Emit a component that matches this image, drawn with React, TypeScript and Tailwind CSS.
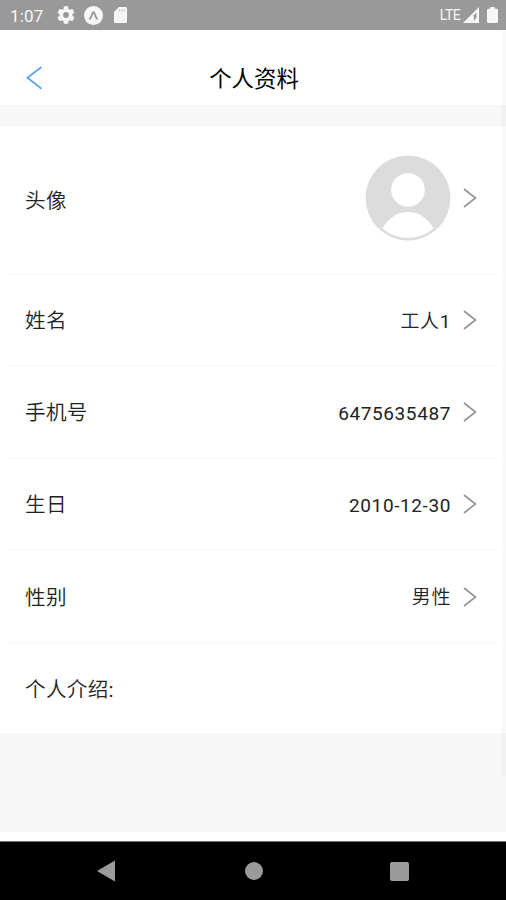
import React from 'react';

interface RowProps {
  label: string;
  className: string;
  divider?: boolean;
  children?: React.ReactNode;
}

const FONT = "font-[Roboto,'Noto_Sans_CJK_SC',sans-serif]";
const LIGHT_FONT = "font-[Roboto,'Noto_Sans_CJK_SC_DemiLight','Noto_Sans_CJK_SC',sans-serif]";

function StatusBar() {
  return (
    <div className="flex h-[30px] shrink-0 items-center justify-between bg-[#999999] pr-2 pl-[10px] text-[#f7f7f7]">
      <div className="flex items-center">
        <span className="w-[46px] pt-px text-[17px] leading-[30px] tracking-[0.2px]">1:07</span>
        <svg className="mr-[9px] ml-px h-[18px] w-[18px]" viewBox="2 2 20 20" fill="currentColor">
          <path d="M19.14 12.94c.04-.3.06-.61.06-.94 0-.32-.02-.64-.07-.94l2.03-1.58c.18-.14.23-.41.12-.61l-1.92-3.32c-.12-.22-.37-.29-.59-.22l-2.39.96c-.5-.38-1.03-.7-1.62-.94l-.36-2.54c-.04-.24-.24-.41-.48-.41h-3.84c-.24 0-.43.17-.47.41l-.36 2.54c-.59.24-1.13.57-1.62.94l-2.39-.96c-.22-.08-.47 0-.59.22L2.74 8.87c-.12.21-.08.47.12.61l2.03 1.58c-.05.3-.09.63-.09.94s.02.64.07.94l-2.03 1.58c-.18.14-.23.41-.12.61l1.92 3.32c.12.22.37.29.59.22l2.39-.96c.5.38 1.03.7 1.62.94l.36 2.54c.05.24.24.41.48.41h3.84c.24 0 .44-.17.47-.41l.36-2.54c.59-.24 1.13-.56 1.62-.94l2.39.96c.22.08.47 0 .59-.22l1.92-3.32c.12-.22.07-.47-.12-.61l-2.01-1.58zM12 15.2a3.2 3.2 0 1 1 0-6.4 3.2 3.2 0 0 1 0 6.4z" />
        </svg>
        <svg className="mr-[11px] h-[19px] w-[19px]" viewBox="0 0 19 19">
          <circle cx="9.5" cy="9.5" r="9.5" fill="currentColor" />
          <path
            d="M5.6 13.6Q7.6 10.6 8.7 6.8q.8-1.4 1.6 0 1.1 3.8 3.1 6.8"
            fill="none"
            stroke="#999999"
            strokeWidth="1.8"
          />
        </svg>
        <svg className="h-4 w-[13px]" viewBox="0 0 13 16">
          <path d="M5 0h6.5Q13 0 13 1.5v13q0 1.5-1.5 1.5h-10Q0 16 0 14.5V5z" fill="currentColor" />
          <path d="M5.2 2v2.6M7.7 2v2.6M10.2 2v2.6" stroke="#c4c4c4" strokeWidth="1.2" />
        </svg>
      </div>
      <div className="flex items-center">
        <span className="text-[14px] tracking-[-0.6px]">LTE</span>
        <svg className="mr-2 ml-[3px] h-4 w-4" viewBox="0 0 16 16">
          <path d="M16 0v16H0z" fill="currentColor" />
          <path d="M13.4 5.5v5.2l-2.600 3.300V8.300z" fill="#999999" />
        </svg>
        <svg className="h-4 w-[11px]" viewBox="0 0 11 16" fill="currentColor">
          <path d="M3.3 0h4.4v1.8h1.8Q11 1.8 11 3.3v11.2Q11 16 9.5 16h-8Q0 16 0 14.5V3.3q0-1.5 1.5-1.5h1.8z" />
        </svg>
      </div>
    </div>
  );
}

function Header() {
  return (
    <div className="flex h-[75px] shrink-0 items-center bg-white pt-5">
      <svg className="ml-[26px] h-6 w-4" viewBox="0 0 16 24" fill="none">
        <path d="M15.5 1 1.5 11.7l14 11" stroke="#5ca6ee" strokeWidth="1.9" />
      </svg>
      <h1 className="mr-10 grow pt-0.5 text-center text-[22.4px] leading-8 font-normal text-black">个人资料</h1>
    </div>
  );
}

function Arrow() {
  return (
    <svg className="ml-3 h-5 w-[14px] shrink-0" viewBox="0 0 14 20" fill="none">
      <path d="M1 1l11.5 9L1 19" stroke="#939393" strokeWidth="1.6" />
    </svg>
  );
}

function Avatar() {
  return (
    <svg className="h-[86px] w-[86px]" viewBox="0 0 86 86">
      <circle cx="43" cy="43" r="42.5" fill="#dcdcdc" />
      <circle cx="43" cy="35" r="16.8" fill="#ffffff" />
      <path d="M17.5 73.5C29 51.5 57 51.5 68.5 73.5Q57 83 43 83T17.5 73.5z" fill="#ffffff" />
    </svg>
  );
}

function Row({ label, className, divider = true, children }: RowProps) {
  return (
    <div className={`flex shrink-0 flex-col bg-white px-2 ${className}`}>
      <div
        className={`flex grow items-center pr-[21px] pl-[17px] text-[#222222] ${divider ? 'border-b-2 border-[#fafafa]' : ''}`}
      >
        <span className={`grow pt-0.5 text-[20.6px] leading-8 tracking-[0.3px] ${LIGHT_FONT}`}>{label}</span>
        {children}
      </div>
    </div>
  );
}

function Value({ text }: { text: string }) {
  return (
    <>
      <span className={`pt-[3px] text-[19px] leading-8 tracking-[0.6px] text-[#222222] ${LIGHT_FONT}`}>{text}</span>
      <Arrow />
    </>
  );
}

function NavBar() {
  return (
    <div className="flex h-[59px] shrink-0 items-center justify-between border-t border-[#777777] bg-black pr-[97px] pl-[97px]">
      <svg className="h-[22px] w-[18px]" viewBox="0 0 18 22">
        <path d="M18 0.5v21L0 11z" fill="#9b9b9b" />
      </svg>
      <div className="ml-0.5 h-[18px] w-[18px] rounded-full bg-[#9b9b9b]" />
      <div className="h-[19px] w-[19px] rounded-xs bg-[#9b9b9b]" />
    </div>
  );
}

export default function App() {
  return (
    <div className={`relative flex h-[900px] w-[506px] flex-col overflow-hidden bg-white ${FONT}`} lang="zh-CN">
      <StatusBar />
      <Header />
      <div className="h-[21px] shrink-0 bg-[#f7f7f7]" />
      <Row label="头像" className="h-[149px]">
        <div className="flex items-center pb-[3px]">
          <Avatar />
          <Arrow />
        </div>
      </Row>
      <Row label="姓名" className="h-[92px]">
        <Value text="工人1" />
      </Row>
      <Row label="手机号" className="h-[92px]">
        <Value text="6475635487" />
      </Row>
      <Row label="生日" className="h-[92px]">
        <Value text="2010-12-30" />
      </Row>
      <Row label="性别" className="h-[93px]">
        <Value text="男性" />
      </Row>
      <Row label="个人介绍:" className="h-[89px]" divider={false} />
      <div className="h-[99px] shrink-0 bg-[#f7f7f7]" />
      <div className="grow bg-white" />
      <NavBar />
      <div className="absolute top-[30px] right-0 h-[746px] w-1 bg-black/[0.025]" />
    </div>
  );
}
